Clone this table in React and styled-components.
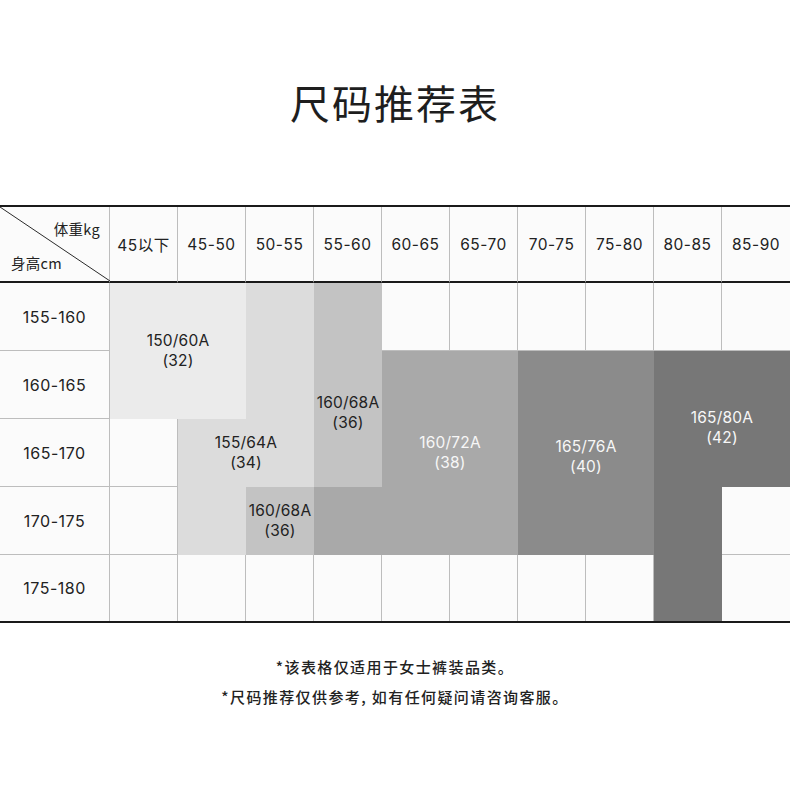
import React from "react";
import styled, { createGlobalStyle } from "styled-components";

const Global = createGlobalStyle`
  html, body { margin: 0; padding: 0; background: #ffffff; }
  body { font-family: "Inter", "Noto Sans CJK SC", sans-serif; color: #222; }
`;

const Page = styled.div`
  width: 790px;
  padding-top: 74px;
  display: flex;
  flex-direction: column;
  align-items: center;
`;

const Title = styled.h1`
  margin: 0 0 75px;
  font-family: "Noto Sans CJK SC", sans-serif;
  font-weight: 400;
  font-size: 40px;
  line-height: 56px;
  letter-spacing: 2px;
  color: #1e1e1e;
`;

const Table = styled.div`
  width: 790px;
  display: grid;
  grid-template-columns: 110px repeat(10, 68px);
  grid-template-rows: 76px repeat(4, 68px) 66px;
  border-top: 2px solid #1a1a1a;
  border-bottom: 2px solid #1a1a1a;
`;

const Cell = styled.div`
  grid-row: ${(p) => p.$r};
  grid-column: ${(p) => p.$c};
  box-sizing: border-box;
  background: #fbfbfb;
  border-right: ${(p) => (p.$last ? "none" : "1px solid #bdbdbd")};
  border-bottom: ${(p) =>
    p.$head ? "2px solid #1a1a1a" : p.$bottom ? "none" : "1px solid #bdbdbd"};
  display: flex;
  align-items: center;
  justify-content: center;
  font-size: ${(p) => (p.$head ? "15.5px" : "16px")};
  letter-spacing: 0.5px;
  color: #222;
`;

const Corner = styled(Cell)`
  position: relative;
  flex-direction: column;
  align-items: stretch;
  justify-content: space-between;
  padding: 12px 9px 8px 11px;
  font-family: "Noto Sans CJK SC", sans-serif;
  font-size: 14.5px;
  letter-spacing: 0.3px;
  line-height: 20px;
`;

const CornerTop = styled.span`
  align-self: flex-end;
`;

const CornerBottom = styled.span`
  align-self: flex-start;
`;

const Diagonal = styled.svg`
  position: absolute;
  left: 0;
  top: 0;
  width: 110px;
  height: 74px;
  pointer-events: none;
`;

const Block = styled.div`
  grid-column: ${(p) => p.$col};
  grid-row: ${(p) => p.$row};
  background: ${(p) => p.$bg};
  color: ${(p) => (p.$light ? "#f7f7f7" : "#222")};
  display: flex;
  flex-direction: column;
  align-items: center;
  justify-content: center;
  padding-top: ${(p) => p.$pt || 0}px;
  font-size: 15.5px;
  line-height: 20.5px;
  letter-spacing: 0.2px;
  text-align: center;
`;

const Notes = styled.div`
  margin-top: 29px;
  display: flex;
  flex-direction: column;
  align-items: center;
  font-family: "Noto Sans CJK SC", sans-serif;
  font-weight: 500;
  font-size: 15px;
  line-height: 30px;
  letter-spacing: 1.4px;
  color: #222;
`;

const weights = ["45以下", "45-50", "50-55", "55-60", "60-65", "65-70", "70-75", "75-80", "80-85", "85-90"];
const heights = ["155-160", "160-165", "165-170", "170-175", "175-180"];

const C1 = "#ebebeb";
const C2 = "#dcdcdc";
const C3 = "#c3c3c3";
const C4 = "#a9a9a9";
const C5 = "#8b8b8b";
const C6 = "#777777";

const Label = ({ a, b }) => (
  <>
    <span>{a}</span>
    <span>{b}</span>
  </>
);

export default function App() {
  return (
    <>
      <Global />
      <Page>
        <Title>尺码推荐表</Title>
        <Table>
          <Corner $head $r="1" $c="1">
            <Diagonal viewBox="0 0 110 74">
              <line x1="0" y1="0" x2="110" y2="74" stroke="#2a2a2a" strokeWidth="1" />
            </Diagonal>
            <CornerTop>体重kg</CornerTop>
            <CornerBottom>身高cm</CornerBottom>
          </Corner>
          {weights.map((w, i) => (
            <Cell key={w} $head $r="1" $c={String(i + 2)} $last={i === weights.length - 1}>
              {w}
            </Cell>
          ))}
          {heights.map((h, r) =>
            [
              <Cell key={h} $r={String(r + 2)} $c="1" $bottom={r === heights.length - 1}>
                {h}
              </Cell>,
              ...weights.map((w, i) => (
                <Cell
                  key={h + w}
                  $r={String(r + 2)}
                  $c={String(i + 2)}
                  $bottom={r === heights.length - 1}
                  $last={i === weights.length - 1}
                />
              )),
            ]
          )}

          <Block $col="2 / 4" $row="2 / 4" $bg={C1}>
            <Label a="150/60A" b="(32)" />
          </Block>

          <Block $col="4 / 5" $row="2 / 4" $bg={C2} />
          <Block $col="3 / 5" $row="4 / 5" $bg={C2}>
            <Label a="155/64A" b="(34)" />
          </Block>
          <Block $col="3 / 4" $row="5 / 6" $bg={C2} />

          <Block $col="5 / 6" $row="2 / 5" $bg={C3} $pt={56}>
            <Label a="160/68A" b="(36)" />
          </Block>
          <Block $col="4 / 5" $row="5 / 6" $bg={C3}>
            <Label a="160/68A" b="(36)" />
          </Block>

          <Block $col="6 / 8" $row="3 / 6" $bg={C4} $light>
            <Label a="160/72A" b="(38)" />
          </Block>
          <Block $col="5 / 6" $row="5 / 6" $bg={C4} />

          <Block $col="8 / 10" $row="3 / 6" $bg={C5} $light $pt={8}>
            <Label a="165/76A" b="(40)" />
          </Block>

          <Block $col="10 / 12" $row="3 / 5" $bg={C6} $light $pt={18}>
            <Label a="165/80A" b="(42)" />
          </Block>
          <Block $col="10 / 11" $row="5 / 7" $bg={C6} />
        </Table>
        <Notes>
          <span>*该表格仅适用于女士裤装品类。</span>
          <span>*尺码推荐仅供参考, 如有任何疑问请咨询客服。</span>
        </Notes>
      </Page>
    </>
  );
}
